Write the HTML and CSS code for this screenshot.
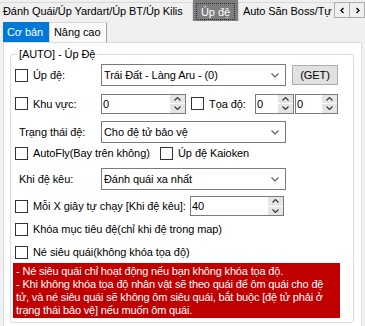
FILE: index.html
```html
<!DOCTYPE html>
<html lang="vi">
<head>
<meta charset="utf-8">
<link rel="stylesheet" href="styles.css">
</head>
<body>
<div class="tabstrip">
  <div class="tabs">
    <div class="tab t1">Đánh Quái/Úp Yardart/Úp BT/Úp Kilis</div>
    <div class="tab sel"><span class="focus">Úp đệ</span></div>
    <div class="tab t3">Auto Săn Boss/Tự động</div>
  </div>
  <div class="scroll">
    <div class="sbtn"><svg width="7" height="7" viewBox="0 0 7 7"><path d="M4.5 1 L2 3.5 L4.5 6" fill="none" stroke="#000" stroke-width="1.3"/></svg></div>
    <div class="sbtn"><svg width="7" height="7" viewBox="0 0 7 7"><path d="M2.5 1 L5 3.5 L2.5 6" fill="none" stroke="#000" stroke-width="1.3"/></svg></div>
  </div>
</div>
<div class="subtabs">
  <div class="subtab active">Cơ bản</div>
  <div class="subtab">Nâng cao</div>
</div>
<div class="subpage">
  <fieldset class="group">
    <legend>[AUTO] - Úp Đệ</legend>

    <div class="row r1">
      <label class="check w86"><span class="cb"></span>Úp đệ:</label>
      <div class="combo w185"><span class="ctext">Trái Đất - Làng Aru - (0)</span><svg class="chev" width="8" height="5" viewBox="0 0 8 5"><path d="M0.5 0.5 L4 4 L7.5 0.5" fill="none" stroke="#606060" stroke-width="1.2"/></svg></div>
      <div class="btn">(GET)</div>
    </div>

    <div class="row r2">
      <label class="check w86"><span class="cb"></span>Khu vực:</label>
      <div class="num w85"><span class="val">0</span><span class="spin"><span class="sp"><svg width="7" height="4" viewBox="0 0 7 4"><path d="M0.5 3.5 L3.5 0.5 L6.5 3.5" fill="none" stroke="#333" stroke-width="1.1"/></svg></span><span class="sp"><svg width="7" height="4" viewBox="0 0 7 4"><path d="M0.5 0.5 L3.5 3.5 L6.5 0.5" fill="none" stroke="#333" stroke-width="1.1"/></svg></span></span></div>
      <label class="check w64 ml5"><span class="cb"></span>Tọa độ:</label>
      <div class="num w39"><span class="val">0</span><span class="spin"><span class="sp"><svg width="7" height="4" viewBox="0 0 7 4"><path d="M0.5 3.5 L3.5 0.5 L6.5 3.5" fill="none" stroke="#333" stroke-width="1.1"/></svg></span><span class="sp"><svg width="7" height="4" viewBox="0 0 7 4"><path d="M0.5 0.5 L3.5 3.5 L6.5 0.5" fill="none" stroke="#333" stroke-width="1.1"/></svg></span></span></div>
      <div class="num w43 ml1"><span class="val">0</span><span class="spin"><span class="sp"><svg width="7" height="4" viewBox="0 0 7 4"><path d="M0.5 3.5 L3.5 0.5 L6.5 3.5" fill="none" stroke="#333" stroke-width="1.1"/></svg></span><span class="sp"><svg width="7" height="4" viewBox="0 0 7 4"><path d="M0.5 0.5 L3.5 3.5 L6.5 0.5" fill="none" stroke="#333" stroke-width="1.1"/></svg></span></span></div>
    </div>

    <div class="row r3">
      <span class="lbl w86">Trạng thái đệ:</span>
      <div class="combo w185"><span class="ctext">Cho đệ tử bảo vệ</span><svg class="chev" width="8" height="5" viewBox="0 0 8 5"><path d="M0.5 0.5 L4 4 L7.5 0.5" fill="none" stroke="#606060" stroke-width="1.2"/></svg></div>
    </div>

    <div class="row r4">
      <label class="check w145"><span class="cb"></span>AutoFly(Bay trên không)</label>
      <label class="check"><span class="cb"></span>Úp đệ Kaioken</label>
    </div>

    <div class="row r5">
      <span class="lbl w86">Khi đệ kêu:</span>
      <div class="combo w185"><span class="ctext">Đánh quái xa nhất</span><svg class="chev" width="8" height="5" viewBox="0 0 8 5"><path d="M0.5 0.5 L4 4 L7.5 0.5" fill="none" stroke="#606060" stroke-width="1.2"/></svg></div>
    </div>

    <div class="row r6">
      <label class="check w175"><span class="cb"></span>Mỗi X giây tự chạy [Khi đệ kêu]:</label>
      <div class="num w94"><span class="val">40</span><span class="spin"><span class="sp"><svg width="7" height="4" viewBox="0 0 7 4"><path d="M0.5 3.5 L3.5 0.5 L6.5 3.5" fill="none" stroke="#333" stroke-width="1.1"/></svg></span><span class="sp"><svg width="7" height="4" viewBox="0 0 7 4"><path d="M0.5 0.5 L3.5 3.5 L6.5 0.5" fill="none" stroke="#333" stroke-width="1.1"/></svg></span></span></div>
    </div>

    <div class="row r7">
      <label class="check"><span class="cb"></span>Khóa mục tiêu đệ(chỉ khi đệ trong map)</label>
    </div>

    <div class="row r8">
      <label class="check"><span class="cb"></span>Né siêu quái(không khóa tọa độ)</label>
    </div>

    <div class="notice">- Né siêu quái chỉ hoạt động nếu bạn không khóa tọa độ.<br>- Khi không khóa tọa độ nhân vật sẽ theo quái để ôm quái cho đệ<br>tử, và né siêu quái sẽ không ôm siêu quái, bắt buộc [đệ tử phải ở<br>trạng thái bảo vệ] nếu muốn ôm quái.</div>
  </fieldset>
</div>
</body>
</html>
```
FILE: styles.css
```css
* { box-sizing: border-box; }
html, body { margin: 0; padding: 0; }
body {
  width: 365px;
  height: 326px;
  overflow: hidden;
  background: #f0f0f0;
  font-family: "Liberation Sans", Arial, sans-serif;
  font-size: 11px;
  letter-spacing: -0.08px;
  color: #000;
}

/* top tab strip */
.tabstrip { display: flex; height: 21px; }
.tabs { display: flex; flex: 1; overflow: hidden; align-items: flex-end; min-width: 0; }
.tab {
  flex: none;
  height: 19px;
  line-height: 17px;
  white-space: nowrap;
  border: 1px solid #d9d9d9;
  border-bottom: none;
  background: #f0f0f0;
  padding: 0 4px 0 3px;
}
.t1 { width: 193px; border-left: none; }
.sel {
  width: 45px;
  height: 21px;
  background: #7d7d7d;
  color: #fff;
  padding: 2px 2px 1px 2px;
  border-color: #7d7d7d;
}
.sel .focus {
  display: block;
  height: 100%;
  border: 1px dotted #2a2a2a;
  line-height: 16px;
  padding-left: 4px;
}
.t3 { padding-left: 4px; }
.scroll { display: flex; flex: none; padding-top: 2px; align-items: flex-start; }
.sbtn {
  width: 16px;
  height: 16px;
  border: 1px solid #adadad;
  background: #f0f0f0;
  display: flex;
  align-items: center;
  justify-content: center;
}
.sbtn + .sbtn { margin-left: -1px; }

/* sub tabs */
.subtabs { display: flex; height: 21px; padding-left: 3px; align-items: flex-end; }
.subtab {
  height: 20px;
  line-height: 18px;
  padding: 0 4px;
  border: 1px solid #d9d9d9;
  border-bottom: none;
  border-right-color: #a0a0a0;
  background: #fafafa;
  white-space: nowrap;
}
.subtab.active {
  width: 46px;
  background: #0078d7;
  border-color: #0078d7;
  color: #fff;
  padding-left: 3px;
}
.subtab:nth-child(2) { width: 58px; }

.subpage {
  margin: 0 3px;
  height: 290px;
  background: #fff;
  border: 1px solid #dcdcdc;
  padding: 5px 7px 0 6px;
}

.group {
  margin: 0;
  border: 1px solid #dcdcdc;
  border-radius: 3px;
  padding: 0 0 4px 2px;
}
.group legend {
  padding: 0 2px;
  margin-left: 4px;
  line-height: 13px;
}

.row { display: flex; align-items: center; margin-left: 2px; }
.r1 { height: 22px; margin-top: 3px; }
.r2 { height: 21px; margin-top: 7px; }
.r3 { height: 22px; margin-top: 7px; }
.r4 { height: 16px; margin-top: 2px; }
.r5 { height: 22px; margin-top: 7px; }
.r6 { height: 20px; margin-top: 6px; }
.r7 { height: 16px; margin-top: 5px; }
.r8 { height: 16px; margin-top: 7px; }

.check { display: flex; align-items: center; gap: 5px; white-space: nowrap; flex: none; }
.cb {
  width: 13px;
  height: 13px;
  border: 1px solid #333;
  background: #fff;
  flex: none;
}
.lbl { padding-left: 4px; flex: none; white-space: nowrap; }
.w86 { width: 86px; }
.w64 { width: 64px; }
.w145 { width: 145px; }
.w175 { width: 175px; }
.w185 { width: 185px; }
.w85 { width: 85px; }
.w39 { width: 39px; }
.w43 { width: 43px; }
.w94 { width: 94px; }
.ml5 { margin-left: 5px; }
.ml1 { margin-left: 1px; }

.combo {
  flex: none;
  height: 22px;
  display: flex;
  align-items: center;
  border: 1px solid #7a7a7a;
  background: #fff;
  padding: 0 6px 0 2px;
}
.ctext { flex: 1; white-space: nowrap; }
.chev { flex: none; }

.btn {
  flex: none;
  width: 46px;
  height: 20px;
  margin-left: 6px;
  border: 1px solid #adadad;
  background: #e1e1e1;
  text-align: center;
  line-height: 18px;
}

.num {
  flex: none;
  height: 20px;
  display: flex;
  border: 1px solid #7a7a7a;
  background: #fff;
}
.val { flex: 1; padding-left: 1px; line-height: 18px; }
.spin {
  flex: none;
  width: 16px;
  display: flex;
  flex-direction: column;
  gap: 1px;
  padding: 0 0 0 1px;
}
.sp {
  flex: 1;
  background: #e5e5e5;
  display: flex;
  align-items: center;
  justify-content: center;
}

.notice {
  margin-top: 3px;
  width: 327px;
  height: 55px;
  background: #c00000;
  color: #fff;
  padding: 2px 3px 0 3px;
  line-height: 13px;
  letter-spacing: -0.17px;
  white-space: nowrap;
  overflow: hidden;
}
```
